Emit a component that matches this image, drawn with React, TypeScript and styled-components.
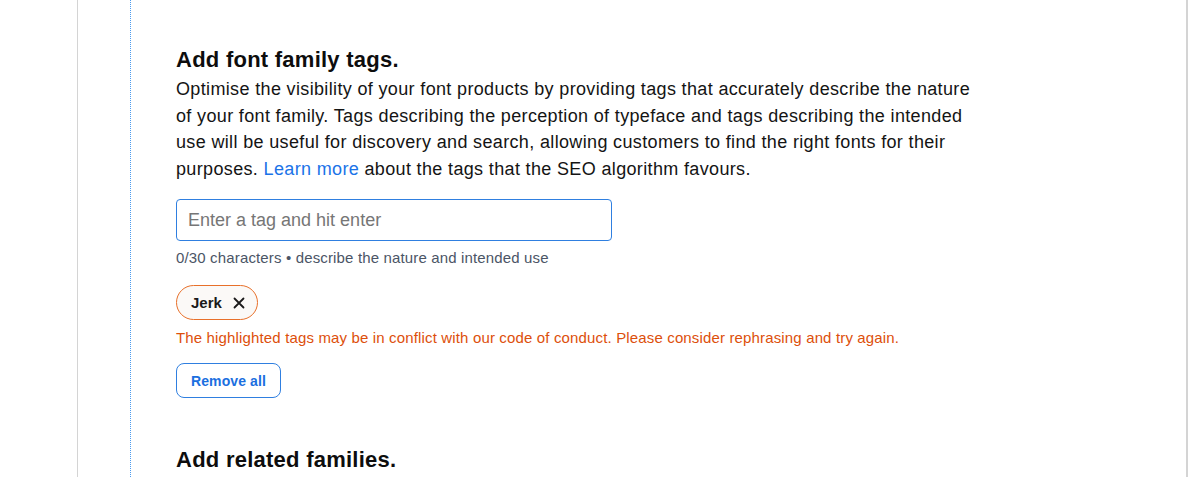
import styled, { createGlobalStyle } from 'styled-components'

const GlobalStyle = createGlobalStyle`
  html, body {
    margin: 0;
    padding: 0;
    background: #ffffff;
    font-family: 'Liberation Sans', Arial, sans-serif;
    color: #111111;
  }
`

const Page = styled.div`
  display: flex;
  height: 477px;
  overflow: hidden;
`

const Frame = styled.div`
  margin-left: 77px;
  width: 1108px;
  border-left: 1px solid #d4d4d4;
  border-right: 2px solid #d4d4d4;
  display: flex;
`

const Gutter = styled.div`
  width: 52px;
  flex-shrink: 0;
  border-right: 1px dotted #4a9bf0;
`

const Content = styled.section`
  padding: 46px 0 0 45px;
  display: flex;
  flex-direction: column;
  align-items: flex-start;
`

const Heading = styled.h2`
  margin: 0;
  font-size: 22px;
  line-height: 28px;
  font-weight: 700;
  letter-spacing: 0.25px;
  color: #0d0d0d;
`

const Lead = styled.p`
  margin: 2px 0 0;
  width: 808px;
  font-size: 18px;
  line-height: 26.5px;
  letter-spacing: 0.35px;
  color: #141414;
`

const TextLink = styled.a`
  color: #1b73e8;
  text-decoration: none;
`

const TagInput = styled.input`
  box-sizing: border-box;
  margin-top: 17px;
  width: 436px;
  height: 42px;
  padding: 0 11px;
  border: 1px solid #2f7fe0;
  border-radius: 4px;
  font-family: inherit;
  font-size: 18px;
  color: #111;
  outline: none;

  &::placeholder {
    color: #767676;
  }
`

const Hint = styled.div`
  margin-top: 7px;
  font-size: 15px;
  line-height: 20px;
  letter-spacing: 0.15px;
  color: #4b5566;
`

const TagList = styled.div`
  margin-top: 17px;
  display: flex;
  gap: 8px;
`

const Tag = styled.span<{ $flagged?: boolean }>`
  box-sizing: border-box;
  height: 35px;
  padding: 0 12px 0 14px;
  display: inline-flex;
  align-items: center;
  gap: 11px;
  border-radius: 18px;
  border: 1.5px solid ${(p) => (p.$flagged ? '#e8702a' : '#b8b8b8')};
  background: #fbf9f7;
  font-size: 15px;
  font-weight: 700;
  color: #1a1a1a;
`

const RemoveIcon = styled.svg`
  width: 12px;
  height: 12px;
`

const ErrorText = styled.div`
  margin-top: 8px;
  font-size: 15px;
  line-height: 20px;
  letter-spacing: 0.15px;
  color: #dd4f0b;
`

const OutlineButton = styled.button`
  box-sizing: border-box;
  margin-top: 15px;
  height: 35px;
  padding: 0 14px;
  border: 1px solid #2f7fe0;
  border-radius: 8px;
  background: #fff;
  font-family: inherit;
  font-size: 14px;
  font-weight: 700;
  letter-spacing: 0.1px;
  color: #1b6fe0;
`

const SubHeading = styled(Heading)`
  margin-top: 48px;
`

export default function App() {
  return (
    <>
      <GlobalStyle />
      <Page>
        <Frame>
          <Gutter />
          <Content>
            <Heading>Add font family tags.</Heading>
            <Lead>
              Optimise the visibility of your font products by providing tags that accurately
              describe the nature of your font family. Tags describing the perception of typeface
              and tags describing the intended use will be useful for discovery and search,
              allowing customers to find the right fonts for their purposes.{' '}
              <TextLink href="#">Learn more</TextLink> about the tags that the SEO algorithm
              favours.
            </Lead>
            <TagInput placeholder="Enter a tag and hit enter" />
            <Hint>0/30 characters • describe the nature and intended use</Hint>
            <TagList>
              <Tag $flagged>
                Jerk
                <RemoveIcon viewBox="0 0 12 12">
                  <path d="M1.5 1.5 L10.5 10.5 M10.5 1.5 L1.5 10.5" stroke="#1a1a1a" strokeWidth="1.8" strokeLinecap="round" />
                </RemoveIcon>
              </Tag>
            </TagList>
            <ErrorText>
              The highlighted tags may be in conflict with our code of conduct. Please consider
              rephrasing and try again.
            </ErrorText>
            <OutlineButton>Remove all</OutlineButton>
            <SubHeading>Add related families.</SubHeading>
          </Content>
        </Frame>
      </Page>
    </>
  )
}
